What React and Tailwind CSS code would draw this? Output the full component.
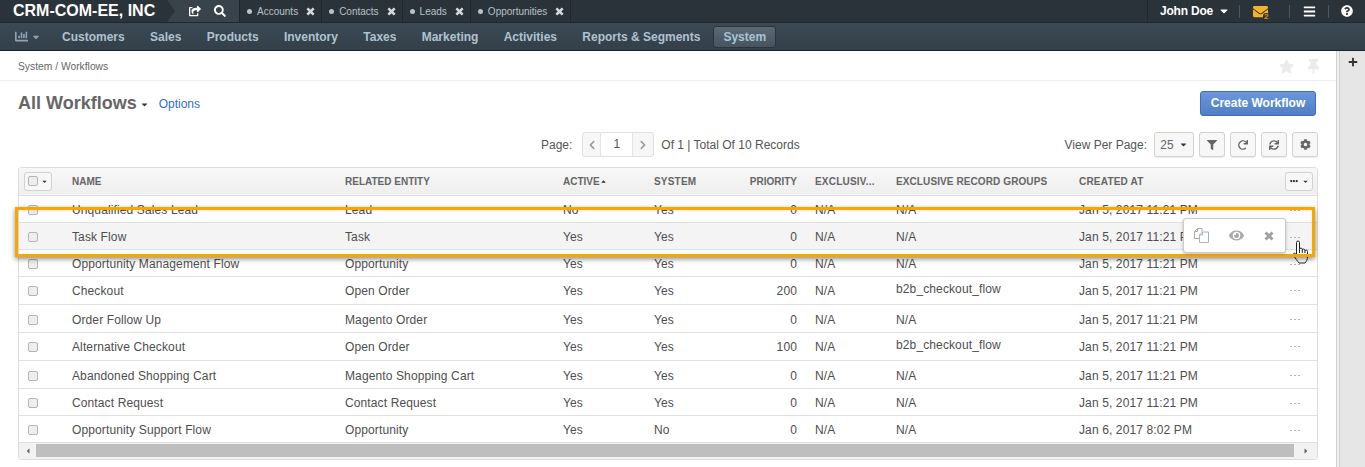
import {
  FaShareSquare,
  FaSearch,
  FaChartBar,
  FaCaretDown,
  FaCaretUp,
  FaCaretLeft,
  FaCaretRight,
  FaBars,
  FaQuestionCircle,
  FaEnvelope,
  FaStar,
  FaThumbtack,
  FaFilter,
  FaRedo,
  FaSync,
  FaCog,
  FaPlus,
  FaEye,
  FaChevronLeft,
  FaChevronRight,
  FaEllipsisH,
} from "react-icons/fa";

const tabs = ["Accounts", "Contacts", "Leads", "Opportunities"];
const menu = ["Customers", "Sales", "Products", "Inventory", "Taxes", "Marketing", "Activities", "Reports & Segments"];

const rows = [
  { name: "Unqualified Sales Lead", entity: "Lead", active: "No", system: "Yes", priority: 0, groups: "N/A", created: "Jan 5, 2017 11:21 PM", h: "h-[27px] [&>td]:pt-[3px]" },
  { name: "Task Flow", entity: "Task", active: "Yes", system: "Yes", priority: 0, groups: "N/A", created: "Jan 5, 2017 11:21 PM", h: "h-[27px] [&>td]:pt-[3px]", hover: true },
  { name: "Opportunity Management Flow", entity: "Opportunity", active: "Yes", system: "Yes", priority: 0, groups: "N/A", created: "Jan 5, 2017 11:21 PM", h: "h-[27px] [&>td]:pt-[3px]" },
  { name: "Checkout", entity: "Open Order", active: "Yes", system: "Yes", priority: 200, groups: "b2b_checkout_flow", created: "Jan 5, 2017 11:21 PM", h: "h-[28px] [&>td]:pt-px", up: true },
  { name: "Order Follow Up", entity: "Magento Order", active: "Yes", system: "Yes", priority: 0, groups: "N/A", created: "Jan 5, 2017 11:21 PM", h: "h-[28px] [&>td]:pt-[3px]" },
  { name: "Alternative Checkout", entity: "Open Order", active: "Yes", system: "Yes", priority: 100, groups: "b2b_checkout_flow", created: "Jan 5, 2017 11:21 PM", h: "h-[28px] [&>td]:pt-px", up: true },
  { name: "Abandoned Shopping Cart", entity: "Magento Shopping Cart", active: "Yes", system: "Yes", priority: 0, groups: "N/A", created: "Jan 5, 2017 11:21 PM", h: "h-[28px] [&>td]:pt-[3px]" },
  { name: "Contact Request", entity: "Contact Request", active: "Yes", system: "Yes", priority: 0, groups: "N/A", created: "Jan 5, 2017 11:21 PM", h: "h-[27px] [&>td]:pt-[3px]" },
  { name: "Opportunity Support Flow", entity: "Opportunity", active: "Yes", system: "No", priority: 0, groups: "N/A", created: "Jan 6, 2017 8:02 PM", h: "h-[27px] [&>td]:pt-[3px]" },
];

function Checkbox() {
  return <span className="block h-[10px] w-[10px] rounded-[2px] border border-[#b5b5b5] bg-[#eeeeee]" />;
}

// heavy cross like the font-awesome 4 one, FaTimes is too thin at this size
function Cross({ className }) {
  return (
    <svg viewBox="0 0 10 10" className={className} fill="none" stroke="currentColor" strokeWidth="2.9">
      <path d="M1.5 1.5L8.5 8.5M8.5 1.5L1.5 8.5" />
    </svg>
  );
}

function CloneIcon() {
  return (
    <svg viewBox="0 0 15 15" className="h-[15px] w-[15px]" fill="none">
      <path d="M5.5 10.5H.5V3.5L3.5.5H8V4" stroke="#b5a89a" />
      <path d="M3.5.5V3.5H.5" stroke="#b5a89a" />
      <path d="M5.5 14.5V7L8.5 4H14.5V14.5Z" stroke="#a5b4c4" />
      <path d="M8.5 4V7H5.5" stroke="#a5b4c4" />
    </svg>
  );
}

function HandCursor() {
  return (
    <svg viewBox="0 0 17 24" className="absolute left-[1292px] top-[189px] h-[24px] w-[17px]" fill="#fff" stroke="#222" strokeWidth="1">
      <path d="M4.5 12V2.5a1.5 1.5 0 0 1 3 0V9.5a1.4 1.4 0 0 1 2.8 0v.8a1.3 1.3 0 0 1 2.6.2v.8a1.2 1.2 0 0 1 2.6.3V17c0 2.5-1 4.5-2.5 6H7C5.5 21 3.5 18.5 1.5 15.5c-1-1.6.5-3 2-1.8L4.5 15Z" />
      <path d="M7.5 9.5V13M10.3 10.3V13M12.9 11.3V13" fill="none" />
    </svg>
  );
}

function ToolButton({ children, className = "w-[26px]" }) {
  return (
    <button className={`flex h-[25px] items-center justify-center rounded-[3px] border border-[#d2d2d2] bg-[#f7f7f7] text-[#666] shadow-[0_1px_1px_rgba(0,0,0,0.08)] ${className}`}>
      {children}
    </button>
  );
}

function TopBar() {
  return (
    <div className="flex h-[23px] border-b border-[#20272d] bg-[#2a323a] text-white">
      <div className="relative flex w-[167px] items-center whitespace-nowrap pl-[13px] text-[16px] font-bold leading-none">
        CRM-COM-EE, INC
      </div>
      <div className="relative flex w-[73px] items-center gap-[13px] border-r border-[#20272d] bg-[#38434c] pl-[22px] text-[12px]">
        <span className="absolute left-0 top-0 h-0 w-0 border-y-[11px] border-l-[8px] border-y-transparent border-l-[#2a323a]" />
        <FaShareSquare />
        <FaSearch />
      </div>
      {tabs.map((tab) => (
        <div key={tab} className="flex items-center border-r border-[#20272d] pl-[7px] pr-[6px] text-[10px] text-[#b9c2c9]">
          <span className="mr-[5px] h-[5px] w-[5px] rounded-full bg-[#b9c2c9]" />
          {tab}
          <Cross className="ml-[8px] h-[9px] w-[9px] text-[#d5dade]" />
        </div>
      ))}
      <div className="ml-auto flex items-center border-l border-[#20272d]">
        <div className="flex w-[91px] items-center pl-[12px] text-[12px] font-bold tracking-[-0.2px]">
          John Doe
          <FaCaretDown className="ml-[5px] text-[12px]" />
        </div>
        <span className="h-[13px] w-px bg-[#4b5761]" />
        <div className="relative flex w-[49px] items-center pl-[13px]">
          <FaEnvelope className="text-[15px] text-[#f5b324]" />
          <span className="absolute left-[23px] top-[9px] h-[8px] rounded-full bg-[#2a323a] px-px text-[8px] font-bold leading-[8px] text-[#e88a1a]">2</span>
        </div>
        <span className="h-[13px] w-px bg-[#4b5761]" />
        <div className="flex w-[38px] justify-center"><FaBars className="text-[13px]" /></div>
        <span className="h-[13px] w-px bg-[#4b5761]" />
        <div className="flex w-[36px] justify-center"><FaQuestionCircle className="text-[12px]" /></div>
      </div>
    </div>
  );
}

function NavBar() {
  return (
    <div className="flex h-[28px] items-center border-b border-[#1d252b] bg-gradient-to-b from-[#3b4954] to-[#33404a] text-[12px] font-bold text-[#b0c2d0]">
      <div className="flex w-[62px] items-center pl-[15px] text-[#8ea3b5]">
        <FaChartBar className="text-[13px]" />
        <FaCaretDown className="ml-[3px] text-[10px]" />
      </div>
      <div className="flex gap-[25.3px]">
        {menu.map((item) => (
          <span key={item}>{item}</span>
        ))}
      </div>
      <span className="ml-[13px] flex h-[22px] items-center rounded-[3px] border border-[#2a343c] bg-gradient-to-b from-[#5c6974] to-[#47545f] px-[9px] text-[#a9c3d6]">
        System
      </span>
    </div>
  );
}

function PageHead() {
  return (
    <>
      <div className="flex h-[30px] items-center justify-between border-b border-[#eeeeee] pl-[18px] pr-[15px] pt-[2px] text-[10.3px] text-[#666]">
        <span>System / Workflows</span>
        <div className="flex items-center gap-[12px] text-[#ebebeb]">
          <FaStar className="text-[15px]" />
          <FaThumbtack className="text-[15px]" />
        </div>
      </div>
      <div className="flex h-[47px] items-center justify-between pb-[3px] pl-[18px] pr-[20px]">
        <div className="flex items-center">
          <span className="text-[18px] font-bold text-[#666]">All Workflows</span>
          <FaCaretDown className="ml-[3px] mt-[3px] text-[9px] text-[#333]" />
          <span className="ml-[10px] mt-[2px] text-[12px] text-[#2f6fd0]">Options</span>
        </div>
        <button className="h-[25px] w-[116px] rounded-[3px] border border-[#3f6eb0] bg-gradient-to-b from-[#6b97dc] to-[#4f7fc6] text-[12px] font-bold text-white">
          Create Workflow
        </button>
      </div>
      <div className="relative flex h-[39px] items-start justify-end pr-[18px] pt-[4px] text-[12px] text-[#555]">
        <div className="absolute left-[541px] top-[4px] flex items-center">
          <span className="mr-[10px]">Page:</span>
          <div className="flex h-[25px] items-stretch rounded-[3px] border border-[#e0e0e0] bg-[#f7f7f7] text-[#999]">
            <span className="flex w-[17px] items-center justify-center"><FaChevronLeft className="text-[10px]" /></span>
            <span className="flex w-[33px] items-center justify-center border-x border-[#e5e5e5] bg-white pb-[2px] text-[#555]">1</span>
            <span className="flex w-[20px] items-center justify-center"><FaChevronRight className="text-[10px]" /></span>
          </div>
          <span className="ml-[7px]">Of 1 | Total Of 10 Records</span>
        </div>
        <div className="flex items-center gap-[5px]">
          <span className="mr-[2px]">View Per Page:</span>
          <ToolButton className="w-[40px] gap-[5px] text-[#555]">25 <FaCaretDown className="text-[9px] text-[#333]" /></ToolButton>
          <ToolButton><FaFilter className="text-[10px]" /></ToolButton>
          <ToolButton><FaRedo className="text-[10px]" /></ToolButton>
          <ToolButton><FaSync className="text-[10px]" /></ToolButton>
          <ToolButton><FaCog className="text-[11px]" /></ToolButton>
        </div>
      </div>
    </>
  );
}

function WorkflowTable() {
  return (
    <div className="mx-[18px] w-[1300px] overflow-hidden rounded-[3px] border border-[#dddddd] text-[12px] text-[#4e4e4e]">
      <table className="w-full table-fixed border-collapse">
        <colgroup>
          <col className="w-[53px]" />
          <col className="w-[273px]" />
          <col className="w-[218px]" />
          <col className="w-[91px]" />
          <col className="w-[82px]" />
          <col className="w-[61px]" />
          <col className="w-[99px]" />
          <col className="w-[183px]" />
          <col className="w-[205px]" />
          <col />
        </colgroup>
        <thead>
          <tr className="h-[27px] border-b border-[#dddddd] bg-gradient-to-b from-[#f7f7f7] to-[#efefef] text-left text-[10px] font-bold uppercase text-[#666]">
            <th className="pl-[5px]">
              <span className="flex h-[19px] w-[28px] items-center justify-center gap-[3px] rounded-[3px] border border-[#d2d2d2] bg-[#f7f7f7]">
                <Checkbox />
                <FaCaretDown className="text-[7px] text-[#333]" />
              </span>
            </th>
            <th className="font-bold">Name</th>
            <th className="font-bold">Related Entity</th>
            <th className="font-bold"><span className="inline-flex items-center">Active<FaCaretUp className="text-[7px] text-[#333]" /></span></th>
            <th className="font-bold tracking-[0.2px]">System</th>
            <th className="text-right font-bold">Priority</th>
            <th className="pl-[18px] font-bold tracking-[0.2px]">Exclusiv...</th>
            <th className="font-bold tracking-[0.1px]">Exclusive Record Groups</th>
            <th className="font-bold tracking-[0.2px]">Created At</th>
            <th className="pr-[4px] text-right">
              <span className="ml-auto flex h-[19px] w-[28px] items-center justify-center gap-[4px] rounded-[3px] border border-[#d2d2d2] bg-[#f7f7f7] text-[#333]">
                <FaEllipsisH className="text-[8px]" />
                <FaCaretDown className="text-[7px]" />
              </span>
            </th>
          </tr>
        </thead>
        <tbody className="tracking-[0.12px]">
          {rows.map((row) => (
            <tr key={row.name} className={`${row.h} border-b border-[#e0e0e0] ${row.hover ? "bg-[#f4f4f4]" : ""}`}>
              <td className="pl-[9px]"><Checkbox /></td>
              <td>{row.name}</td>
              <td>{row.entity}</td>
              <td>{row.active}</td>
              <td>{row.system}</td>
              <td className="text-right">{row.priority}</td>
              <td className="pl-[18px]">N/A</td>
              <td className={row.up ? "pb-[4px]" : ""}>{row.groups}</td>
              <td>{row.created}</td>
              <td className="pl-[6px]">
                <span className="flex gap-[2px]">
                  <span className="h-px w-[2px] bg-[#b5b5b5]" />
                  <span className="h-px w-[2px] bg-[#b5b5b5]" />
                  <span className="h-px w-[2px] bg-[#b5b5b5]" />
                </span>
              </td>
            </tr>
          ))}
        </tbody>
      </table>
      <div className="flex h-[16px] items-center justify-between bg-[#f2f2f2] text-[#666]">
        <span className="flex w-[17px] justify-center"><FaCaretLeft className="text-[8px]" /></span>
        <span className="h-[13px] flex-1 bg-[#bebebe]" />
        <span className="flex w-[23px] justify-center"><FaCaretRight className="text-[8px]" /></span>
      </div>
    </div>
  );
}

function RowHighlight() {
  return (
    <>
      <HandCursor />
      <div className="pointer-events-none absolute left-[15px] top-[156px] h-[50px] w-[1300px] border-[3px] border-[#f7a800] shadow-[0_2px_5px_rgba(0,0,0,0.45),inset_0_1px_3px_rgba(0,0,0,0.1)]" />
      <div className="absolute left-[1183px] top-[167px] flex h-[35px] w-[103px] items-center gap-[20px] rounded-[3px] border border-[#cccccc] bg-white pl-[10px] text-[#aaaaaa] shadow-[0_1px_3px_rgba(0,0,0,0.25)]">
        <CloneIcon />
        <FaEye className="text-[15px]" />
        <Cross className="h-[10px] w-[10px] text-[#a0a0a0]" />
      </div>
    </>
  );
}

export default function App() {
  return (
    <div className="flex h-[467px] w-[1365px] flex-col overflow-hidden bg-white font-['Liberation_Sans',Arial,sans-serif]">
      <TopBar />
      <NavBar />
      <div className="flex min-h-0 flex-1">
        <main className="relative w-[1336px]">
          <PageHead />
          <WorkflowTable />
          <RowHighlight />
        </main>
        <div className="w-[4px] border-x border-[#d0d0d0] bg-[#f0f0f0]" />
        <aside className="flex w-[25px] justify-center bg-[#e6e6e6] pt-[6px]">
          <FaPlus className="text-[10px] text-[#333]" />
        </aside>
      </div>
    </div>
  );
}
